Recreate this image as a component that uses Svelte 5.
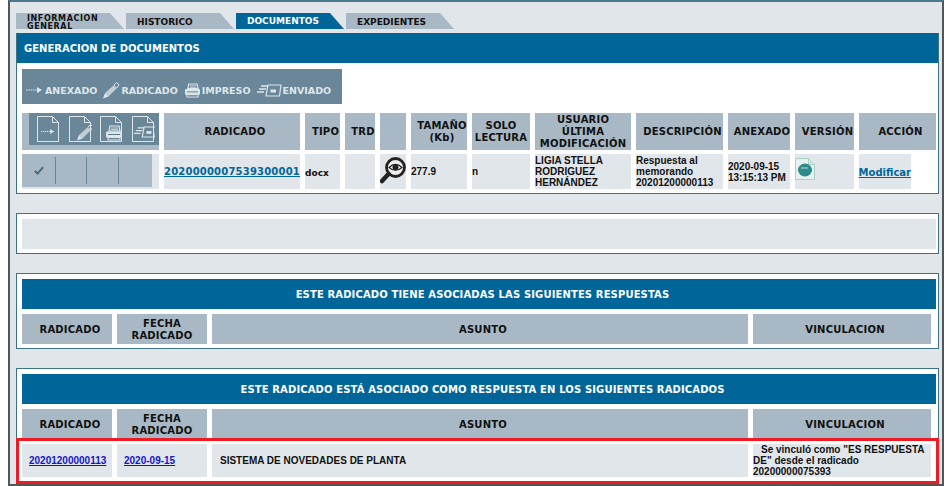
<script>
  // Column widths (px) of the document table
  const docCols = '137px 136px 35px 30px 26px 56px 58px 96px 87px 62px 59px 77px';
  const tabs = [
    { label: 'INFORMACION GENERAL', small: true },
    { label: 'HISTORICO' },
    { label: 'DOCUMENTOS', active: true },
    { label: 'EXPEDIENTES' }
  ];
  // "tight" headers fill their cell, the rest carry a leading gap like the original markup
  const docHeaders = [
    { text: 'RADICADO' },
    { text: 'TIPO' },
    { text: 'TRD' },
    { text: '' },
    { text: 'TAMAÑO (Kb)' },
    { text: 'SOLO LECTURA', tight: true },
    { text: 'USUARIO ÚLTIMA MODIFICACIÓN', tight: true },
    { text: 'DESCRIPCIÓN' },
    { text: 'ANEXADO' },
    { text: 'VERSIÓN' },
    { text: 'ACCIÓN' }
  ];
  const respHeaders = [
    { text: 'RADICADO' },
    { text: 'FECHA RADICADO', tight: true },
    { text: 'ASUNTO' },
    { text: 'VINCULACION' }
  ];
  const docIcons = [
    { id: 'i-arrow', x: 4, y: 12, w: 15, h: 7 },
    { id: 'i-pen', x: 7, y: 7, w: 18, h: 18 },
    { id: 'i-print', x: 5, y: 9, w: 18, h: 16 },
    { id: 'i-mail', x: 2, y: 10, w: 23, h: 12 }
  ];
</script>

<svg class="defs" width="0" height="0" aria-hidden="true">
  <defs>
    <symbol id="i-arrow" viewBox="0 0 18 8">
      <path d="M0 4h11" stroke="currentColor" stroke-width="1.2" stroke-dasharray="1.5 .8" fill="none" />
      <path d="M11 1l5 3-5 3z" fill="currentColor" />
    </symbol>
    <symbol id="i-pen" viewBox="0 0 18 18">
      <path d="M1 17.500l2-5.500 3.500 3.500z" fill="currentColor" />
      <path d="M3 12l9-8 3 3-8.500 8.500z" fill="currentColor" opacity=".75" />
      <path d="M12 4l2.500-2.500 2.500 2-2 3.500" fill="none" stroke="currentColor" stroke-width="1" />
    </symbol>
    <symbol id="i-print" viewBox="0 0 18 16">
      <path d="M5 1h9l1 5H4z" fill="none" stroke="currentColor" stroke-width="1.2" />
      <path d="M6 3h7M6 4.600h7" stroke="currentColor" stroke-width=".8" />
      <rect x="1" y="6.500" width="16" height="6" rx="1" fill="currentColor" />
      <rect x="3" y="9" width="12" height="1" fill="#5d7a8c" />
      <rect x="3" y="12.500" width="12" height="2.500" fill="none" stroke="currentColor" />
    </symbol>
    <symbol id="i-mail" viewBox="0 0 25 13">
      <path d="M4 2h7M2 5h7M0 8h7" stroke="currentColor" stroke-width="1.4" />
      <path d="M11 1h13l-1.500 11H9z" fill="none" stroke="currentColor" stroke-width="1.2" />
      <rect x="13.500" y="5.500" width="5.500" height="3" fill="currentColor" />
    </symbol>
  </defs>
</svg>

<div class="frame">
  <nav class="tabs">
    {#each tabs as tab}
      <div class="tab" class:active={tab.active} class:small={tab.small}><span>{tab.label}</span></div>
    {/each}
  </nav>

  <section class="panel first">
    <h2 class="title">GENERACION DE DOCUMENTOS</h2>
    <div class="toolbar">
      <svg class="ic" width="18" height="8"><use href="#i-arrow" /></svg><span class="tool">ANEXADO</span>
      <svg class="ic pen" width="18" height="18"><use href="#i-pen" /></svg><span class="tool">RADICADO</span>
      <svg class="ic print" width="17" height="15"><use href="#i-print" /></svg><span class="tool">IMPRESO</span>
      <svg class="ic mail" width="25" height="13"><use href="#i-mail" /></svg><span class="tool">ENVIADO</span>
    </div>

    <div class="grid head-row" style="grid-template-columns: {docCols}">
      <div class="th icons">
        <div class="icon-strip">
          {#each docIcons as icon}
            <svg class="doc-ic" width="23" height="27" viewBox="0 0 23 27">
              <path d="M.5.5h15l6 6v19H.5zM15.500.5v6h6" fill="none" stroke="currentColor" />
              <use href="#{icon.id}" x={icon.x} y={icon.y} width={icon.w} height={icon.h} />
            </svg>
          {/each}
        </div>
      </div>
      {#each docHeaders as h}
        <div class="th" class:tight={h.tight}>{h.text}</div>
      {/each}
    </div>

    <div class="grid data-row" style="grid-template-columns: {docCols}">
      <div class="td state">
        <div class="state-strip">
          <div class="slot">
            <svg width="10" height="9" viewBox="0 0 13 11"><path d="M1 6l3.500 3.500L12 1" fill="none" stroke="#4a6a80" stroke-width="2.600" /></svg>
          </div>
          <div class="slot"></div>
          <div class="slot"></div>
          <div class="slot"></div>
        </div>
      </div>
      <div class="td"><a class="num-link" href="#doc">2020000007539300001</a></div>
      <div class="td tipo">docx</div>
      <div class="td"></div>
      <div class="td eye">
        <svg width="26" height="27" viewBox="0 0 26 27">
          <circle cx="15.500" cy="10.500" r="9" fill="#eee" stroke="#222" stroke-width="2.800" />
          <path d="M9 10.500q6.500-6.500 13 0q-6.500 5.500-13 0z" fill="#fff" stroke="#222" stroke-width="1.200" />
          <circle cx="15.500" cy="10.200" r="3" fill="#222" />
          <path d="M8.500 17L2 24" stroke="#222" stroke-width="4.500" stroke-linecap="round" />
        </svg>
      </div>
      <div class="td cell">277.9</div>
      <div class="td cell">n</div>
      <div class="td cell">LIGIA STELLA RODRIGUEZ HERNÁNDEZ</div>
      <div class="td cell">Respuesta al memorando 20201200000113</div>
      <div class="td cell">2020-09-15 13:15:13 PM</div>
      <div class="td version">
        <svg width="20" height="26" viewBox="0 0 20 26">
          <path d="M.5 3.500h13l6 6v15H.5z" fill="#e6f1ee" stroke="#a9d1c8" />
          <path d="M13.500 3.500v6h6" fill="#cfe5e0" stroke="#a9d1c8" />
          <ellipse cx="10" cy="15" rx="7" ry="6.500" fill="#2f8a8c" />
          <path d="M6 13h7" stroke="#9fd0cc" stroke-width="1.200" />
        </svg>
      </div>
      <div class="td action"><a class="num-link" href="#mod">Modificar</a></div>
    </div>
  </section>

  <section class="panel empty">
    <div class="blank"></div>
  </section>

  <section class="panel resp">
    <h3 class="banner">ESTE RADICADO TIENE ASOCIADAS LAS SIGUIENTES RESPUESTAS</h3>
    <div class="grid resp-grid">
      {#each respHeaders as h}
        <div class="th" class:tight={h.tight}>{h.text}</div>
      {/each}
    </div>
  </section>

  <section class="panel resp last">
    <h3 class="banner">ESTE RADICADO ESTÁ ASOCIADO COMO RESPUESTA EN LOS SIGUIENTES RADICADOS</h3>
    <div class="grid resp-grid">
      {#each respHeaders as h}
        <div class="th" class:tight={h.tight}>{h.text}</div>
      {/each}
    </div>
    <div class="grid resp-grid data">
      <div class="td link-cell"><a href="#r">20201200000113</a></div>
      <div class="td link-cell"><a href="#f">2020-09-15</a></div>
      <div class="td asunto">SISTEMA DE NOVEDADES DE PLANTA</div>
      <div class="td vinc"><span class="indent"></span>Se vinculó como "ES RESPUESTA DE" desde el radicado 20200000075393</div>
    </div>
    <div class="highlight"></div>
  </section>
</div>

<style>
  :global(body) {
    margin: 0;
    background: #fff;
    overflow: hidden;
  }

  .defs {
    position: absolute;
  }

  .frame {
    box-sizing: border-box;
    width: 936px;
    height: 486px;
    margin-left: 8px;
    padding: 11px 2px 0 6px;
    background: #e1e6ea;
    border-left: 2px solid #555;
    border-right: 2px solid #555;
    border-bottom: 2px solid #555;
    border-top: 2px solid #4a7a8c;
    font-family: "DejaVu Sans", Verdana, sans-serif;
    overflow: hidden;
    position: relative;
  }

  .tabs {
    display: flex;
    gap: 2px;
    height: 16px;
    margin-bottom: 4px;
  }

  .tab {
    width: 108px;
    height: 16px;
    display: flex;
    align-items: center;
    box-sizing: border-box;
    padding: 2px 0 0 11px;
    background: #a8b8c4;
    color: #111;
    font-size: 9px;
    font-weight: bold;
    clip-path: polygon(0 0, 94px 0, 108px 16px, 0 16px);
  }

  .tab.active {
    background: #006699;
    color: #fff;
    padding: 0 0 1px 11px;
  }

  .tab.small {
    align-items: flex-start;
    padding: 2px 0 0 11px;
    font-size: 8px;
    letter-spacing: 0.6px;
  }

  .tab.small span {
    width: 80px;
    line-height: 7.500px;
    display: block;
  }

  .panel {
    background: #fff;
    border: 1px solid #3d7283;
    box-sizing: border-box;
    width: 923px;
    position: relative;
  }

  .first {
    height: 161px;
    border-top: 0;
    padding: 0 2px 0 5px;
  }

  .title {
    margin: 0 -2px 6px -5px;
    height: 30px;
    padding-left: 7px;
    display: flex;
    align-items: center;
    background: #006699;
    color: #fff;
    font-size: 10px;
    font-weight: bold;
  }

  .toolbar {
    width: 320px;
    height: 35px;
    box-sizing: border-box;
    padding: 7px 0 0 4px;
    background: #6a8799;
    color: #dfe6ea;
    font-size: 9.500px;
    font-weight: bold;
    display: flex;
    align-items: center;
    margin-bottom: 9px;
  }

  .ic {
    flex: none;
  }

  .tool {
    margin-left: 1px;
  }

  .pen {
    margin-left: 5px;
  }

  .print,
  .mail {
    margin-left: 6px;
  }

  .grid {
    display: grid;
    column-gap: 5px;
  }

  .th {
    box-sizing: border-box;
    padding: 2px 0 0 6px;
    background: #a8b8c4;
    color: #111;
    font-size: 10px;
    line-height: 12px;
    font-weight: bold;
    letter-spacing: 0.2px;
    text-align: center;
    display: flex;
    align-items: center;
    justify-content: center;
  }

  .th.tight {
    padding-left: 0;
  }

  .td {
    background: #e1e6ea;
    font-size: 9px;
    color: #111;
  }

  .head-row {
    height: 36px;
    margin-bottom: 5px;
  }

  .head-row .th {
    padding-top: 1px;
  }

  .data-row {
    height: 35px;
  }

  .head-row .th.icons {
    justify-content: flex-end;
    align-items: flex-start;
    padding: 0;
  }

  .icon-strip {
    width: 130px;
    height: 32px;
    background: #6a8799;
    display: flex;
    align-items: center;
    box-sizing: border-box;
    padding-left: 8px;
    gap: 8.500px;
    color: #dfe6ea;
  }

  .state {
    display: flex;
    align-items: flex-start;
  }

  .state-strip {
    width: 130px;
    height: 33px;
    background: #a8b8c4;
    display: flex;
    align-items: center;
  }

  .slot {
    width: 32px;
    height: 27px;
    display: flex;
    align-items: center;
    justify-content: center;
    border-right: 1px solid #6a8799;
    box-sizing: border-box;
  }

  .slot:first-child {
    width: 34px;
  }

  .slot:nth-child(2) {
    width: 31px;
  }

  .slot:last-child {
    border-right: 0;
  }

  .num-link {
    color: #006699;
    font-size: 10px;
    font-weight: bold;
    text-decoration: underline;
  }

  .data-row .td:nth-child(2) {
    display: flex;
    align-items: center;
    justify-content: center;
    white-space: nowrap;
    letter-spacing: 0.2px;
  }

  .tipo {
    display: flex;
    align-items: center;
    padding-top: 2px;
    box-sizing: border-box;
    font-weight: bold;
    font-size: 9px;
  }

  .cell {
    display: flex;
    align-items: center;
    font-family: "Liberation Sans", Arial, sans-serif;
    font-weight: bold;
    font-size: 10px;
    line-height: 11px;
  }

  .eye {
    line-height: 0;
    padding-top: 3px;
  }

  .version {
    padding-top: 1px;
    line-height: 0;
  }

  .action {
    display: flex;
    align-items: center;
    justify-content: flex-end;
    box-sizing: border-box;
    background: linear-gradient(to right, #e1e6ea 52px, #fff 52px);
    padding: 2px 25px 0 0;
  }

  .empty {
    height: 41px;
    margin-top: 19px;
    padding: 5px 2px 5px 5px;
  }

  .blank {
    height: 30px;
    background: #e1e6ea;
  }

  .resp {
    margin-top: 19px;
    padding: 5px 2px 5px 5px;
    height: 76px;
  }

  .last {
    height: 116px;
  }

  .banner {
    margin: 0 0 5px;
    height: 30px;
    padding-left: 7px;
    background: #006699;
    color: #fff;
    font-size: 10px;
    letter-spacing: 0.13px;
    font-weight: bold;
    display: flex;
    align-items: center;
    justify-content: center;
  }

  .resp-grid {
    grid-template-columns: 90px 90px 536px 178px;
    height: 30px;
  }

  .data {
    height: 33px;
    margin-top: 5px;
  }

  .data .td {
    font-family: "Liberation Sans", Arial, sans-serif;
    font-weight: bold;
    font-size: 10px;
    line-height: 11px;
  }

  .link-cell,
  .asunto {
    display: flex;
    align-items: center;
  }

  .link-cell {
    padding-left: 7px;
  }

  .link-cell a {
    color: #1414c8;
  }

  .asunto {
    padding-left: 8px;
  }

  .indent {
    display: inline-block;
    width: 8px;
  }

  .highlight {
    position: absolute;
    left: -1px;
    right: -1px;
    bottom: -1px;
    height: 46px;
    box-sizing: border-box;
    border: 3px solid #ed1c24;
    pointer-events: none;
  }
</style>
